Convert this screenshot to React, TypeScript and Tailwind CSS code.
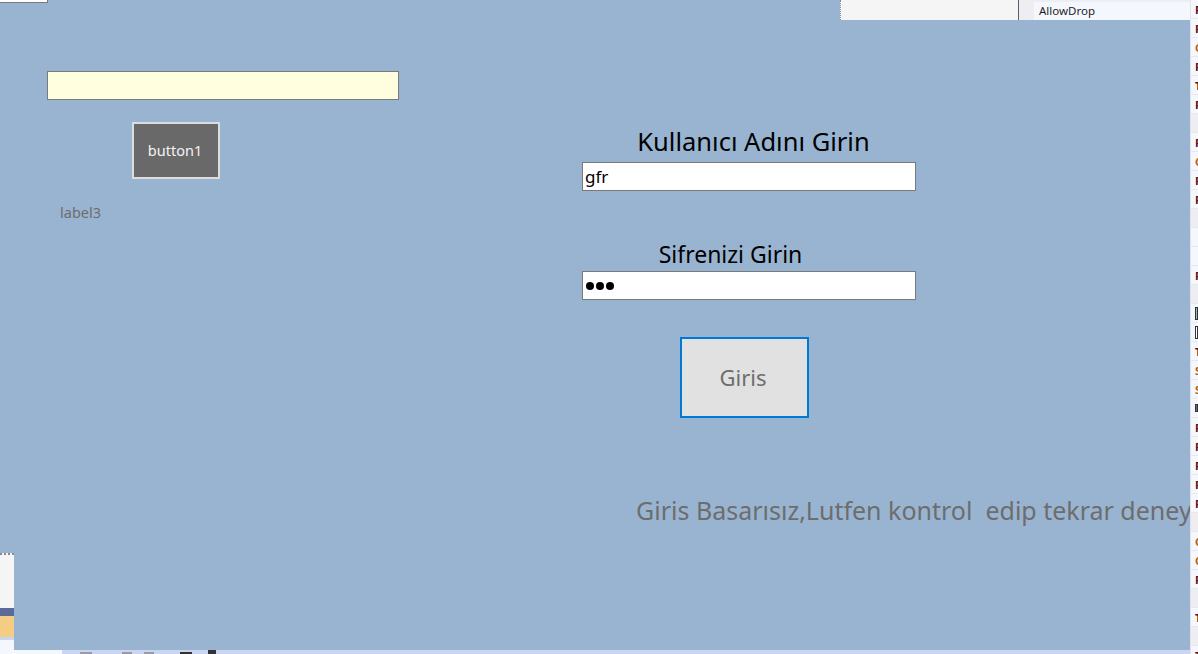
import React from "react";

const font = { fontFamily: '"Noto Sans", "Open Sans", sans-serif' };

type PropRow = { kind: "val" | "cat" | "blank" | "check" | "box" | "dark"; ch?: string; color?: string };

const propRows: PropRow[] = [
  { kind: "val", ch: "F" }, { kind: "val", ch: "F" }, { kind: "val", ch: "C", color: "#b0600a" },
  { kind: "val", ch: "F" }, { kind: "val", ch: "T" }, { kind: "val", ch: "F" },
  { kind: "cat" }, { kind: "val", ch: "F" }, { kind: "val", ch: "C", color: "#b0600a" },
  { kind: "val", ch: "F" }, { kind: "val", ch: "F" }, { kind: "cat" },
  { kind: "blank" }, { kind: "blank" }, { kind: "val", ch: "F" }, { kind: "cat" },
  { kind: "check" }, { kind: "box" }, { kind: "val", ch: "T" }, { kind: "val", ch: "S", color: "#b0600a" },
  { kind: "val", ch: "S", color: "#b0600a" }, { kind: "dark" }, { kind: "val", ch: "F" },
  { kind: "val", ch: "F" }, { kind: "val", ch: "F" }, { kind: "val", ch: "F" }, { kind: "val", ch: "F" },
  { kind: "cat" }, { kind: "val", ch: "C", color: "#b0600a" }, { kind: "val", ch: "C", color: "#b0600a" },
  { kind: "val", ch: "F" }, { kind: "cat" }, { kind: "val", ch: "T" }, { kind: "cat" }, { kind: "val", ch: "T" },
];

function PropertyStrip() {
  return (
    <div className="flex w-[8px] flex-col overflow-hidden border-l border-[#e3e3ea] bg-[#f5f7ff]">
      {propRows.map((r, i) => (
        <div
          key={i}
          className={
            "flex h-[19px] shrink-0 items-center overflow-hidden border-b border-[#e8e8ee] pl-[4px] " +
            (r.kind === "cat" ? "bg-[#eeeef2]" : "")
          }
        >
          {r.kind === "val" && (
            <span className="text-[11px] font-bold leading-none" style={{ ...font, color: r.color ?? "#5c1010" }}>
              {r.ch}
            </span>
          )}
          {r.kind === "check" && <div className="h-[13px] w-[6px] border border-[#333] bg-[#99b4d1]" />}
          {r.kind === "box" && <div className="h-[13px] w-[6px] border border-[#333] bg-white" />}
          {r.kind === "dark" && <div className="h-[8px] w-[6px] border border-[#333] bg-[#6b6b6b]" />}
        </div>
      ))}
    </div>
  );
}

function Input({ children }: { children?: React.ReactNode }) {
  return (
    <div className="flex h-[29px] w-[334px] items-center border border-[#7a7a7a] bg-white pl-[2px] text-[17px] text-black">
      {children}
    </div>
  );
}

export default function App() {
  return (
    <div className="flex h-[654px] w-[1198px] overflow-hidden bg-[#99b4d1]" style={font}>
      <div className="flex w-[1190px] flex-col">
        {/* strip of the designer visible above the form */}
        <div className="flex h-[20px] shrink-0">
          <div className="w-[840px]">
            <div className="h-[3px] w-[48px] border-b border-r border-[#7a7a7a] bg-white" />
          </div>
          <div className="w-[178px] border-l border-dotted border-[#8a8a8a] bg-[#f5f5f5]" />
          <div className="w-px bg-[#5f5f5f]" />
          <div className="w-[15px] bg-[#eeeef2]" />
          <div className="flex w-[156px] flex-col bg-[#eeeef2] pt-[2px]">
            <div className="flex h-[18px] items-center bg-[#f5f7ff] pl-[5px] text-[11.5px] text-[#1e1e1e]">AllowDrop</div>
          </div>
        </div>

        {/* form body */}
        <div className="relative flex h-[630px] shrink-0">
          <div className="flex w-[582px] shrink-0 flex-col items-start pl-[47px] pt-[51px]">
            <div className="h-[29px] w-[352px] border border-[#7a7a7a] bg-[#ffffe0]" />
            <div className="ml-[85px] mt-[22px] flex h-[57px] w-[88px] items-center justify-center border-2 border-[#dcdcdc] bg-[#696969] pr-[2px] text-[14.5px] text-[#f4f4f4]">
              button1
            </div>
            <div className="ml-[13px] mt-[24px] text-[14.5px] leading-[19px] text-[#6d6d6d]">label3</div>
          </div>

          <div className="flex w-[608px] shrink-0 flex-col items-start overflow-hidden pt-[105px]">
            <div className="w-[334px] pl-[9px] text-center text-[25.5px] leading-[32px] text-black">Kullanıcı Adını Girin</div>
            <div className="mt-[5px]">
              <Input>gfr</Input>
            </div>
            <div className="mt-[47px] w-[334px] pr-[37px] text-center text-[23px] leading-[32px] text-black">Sifrenizi Girin</div>
            <div className="mt-[1px]">
              <Input>
                <div className="flex gap-[2px] pl-[1px]">
                  <span className="h-[8px] w-[8px] rounded-full bg-black" />
                  <span className="h-[8px] w-[8px] rounded-full bg-black" />
                  <span className="h-[8px] w-[8px] rounded-full bg-black" />
                </div>
              </Input>
            </div>
            <div className="ml-[98px] mt-[37px] flex h-[81px] w-[129px] items-center justify-center border-2 border-[#0078d7] bg-[#e1e1e1] pr-[3px] text-[22px] text-[#6d6d6d]">
              Giris
            </div>
            <div className="ml-[54px] mt-[76px] whitespace-pre text-[25px] leading-[32px] text-[#6d6d6d]">
              Giris Basarısız,Lutfen kontrol  edip tekrar deney
            </div>
          </div>

          {/* designer panel peeking out on the lower left */}
          <div className="absolute bottom-0 left-0 flex h-[97px] w-[14px] flex-col">
            <div className="h-[55px] border-t-2 border-dotted border-[#8a8a8a] bg-[#f5f5f5]" />
            <div className="h-[8px] bg-[#5a6a9a]" />
            <div className="h-[21px] bg-[#f5cc84]" />
            <div className="h-[3px] bg-[#c8d4f0]" />
            <div className="flex-1 bg-[#f5f7ff]" />
          </div>
        </div>

        {/* toolbar strip under the form */}
        <div className="flex h-[4px] shrink-0 items-end bg-[#ccd5f0]">
          <div className="h-full w-[62px] bg-[#f5f7ff]" />
          <div className="ml-[18px] h-[2px] w-[12px] bg-[#9a9aa8]" />
          <div className="ml-[30px] h-[2px] w-[10px] bg-[#9a9aa8]" />
          <div className="ml-[12px] h-[2px] w-[10px] bg-[#9a9aa8]" />
          <div className="ml-[26px] h-[2px] w-[12px] bg-[#333]" />
          <div className="ml-[16px] h-[4px] w-[8px] bg-[#333]" />
        </div>
      </div>
      <PropertyStrip />
    </div>
  );
}
